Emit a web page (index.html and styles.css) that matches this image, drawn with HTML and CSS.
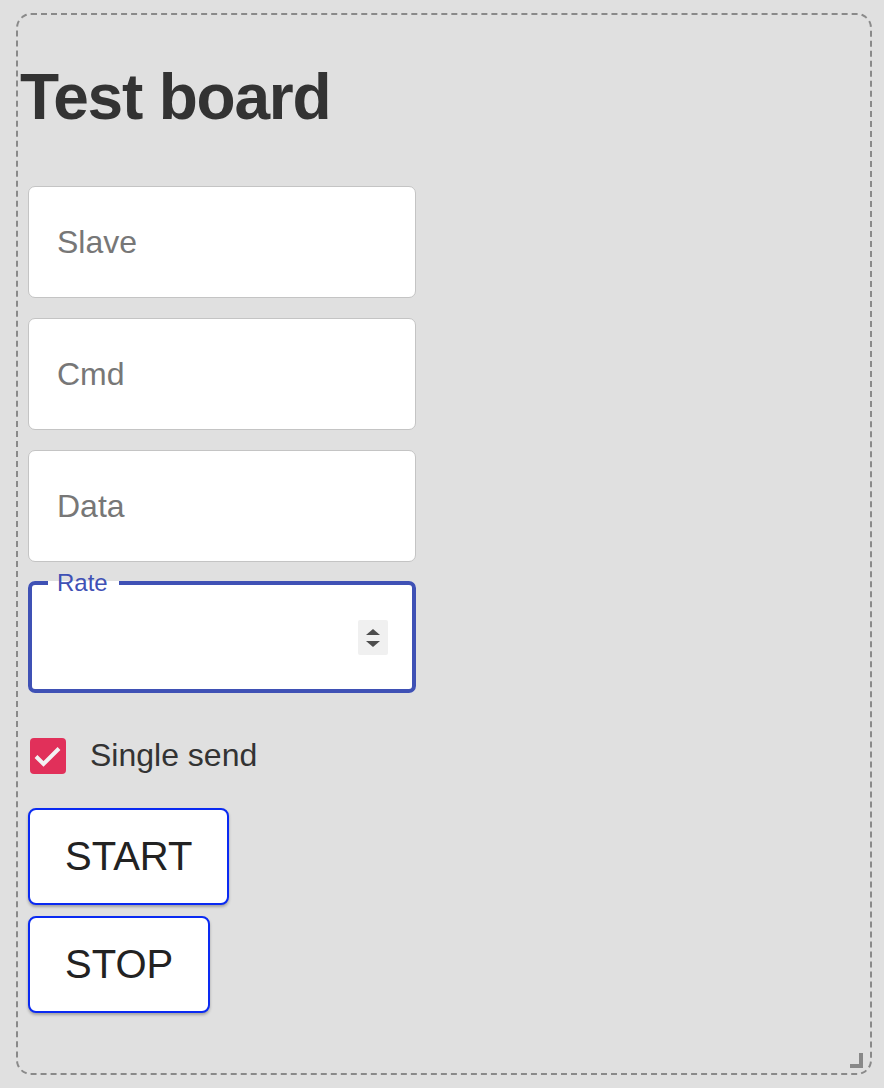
FILE: index.html
```html
<!DOCTYPE html>
<html lang="en">
<head>
<meta charset="utf-8">
<title>Test board</title>
<link rel="stylesheet" href="styles.css">
</head>
<body>
<div class="board">
  <h1 class="title">Test board</h1>
  <form class="form">
    <div class="field"><input class="input" type="text" placeholder="Slave"></div>
    <div class="field"><input class="input" type="text" placeholder="Cmd"></div>
    <div class="field"><input class="input" type="text" placeholder="Data"></div>
    <fieldset class="field-focused">
      <legend class="legend">Rate</legend>
      <div class="focused-inner">
        <span class="spinner">
          <svg width="30" height="35" viewBox="0 0 30 35">
            <path d="M8 15 L15 9 L22 15 Z" fill="#4d4d4d"/>
            <path d="M8 21 L22 21 L15 27 Z" fill="#4d4d4d"/>
          </svg>
        </span>
      </div>
    </fieldset>
    <label class="check-row">
      <span class="checkbox">
        <svg width="36" height="36" viewBox="0 0 36 36">
          <path d="M6 18.5 L13.5 26 L29 10.5" fill="none" stroke="#f2f2f2" stroke-width="4"/>
        </svg>
      </span>
      <span class="check-label">Single send</span>
    </label>
    <div class="buttons">
      <button type="button" class="btn">START</button>
      <button type="button" class="btn">STOP</button>
    </div>
  </form>
  <span class="resizer"></span>
</div>
</body>
</html>
```
FILE: styles.css
```css
html, body {
  margin: 0;
  padding: 0;
  background: #e0e0e0;
  font-family: "Liberation Sans", Arial, sans-serif;
}

.board {
  position: relative;
  box-sizing: border-box;
  margin: 13px 12px 0 16px;
  width: 856px;
  height: 1062px;
  border: 2px dashed #8a8a8a;
  border-radius: 15px;
  padding: 0 0 0 2px;
}

.title {
  margin: 44px 0 0 0;
  font-size: 64px;
  line-height: 77px;
  font-weight: 700;
  color: #333;
  letter-spacing: -1.2px;
}

.form {
  margin: 50px 0 0 8px;
  display: flex;
  flex-direction: column;
  align-items: flex-start;
}

.field {
  width: 388px;
  height: 112px;
  margin-bottom: 20px;
}

.input {
  box-sizing: border-box;
  width: 100%;
  height: 100%;
  border: 1px solid #c4c4c4;
  border-radius: 7px;
  background: #fff;
  padding: 0 28px;
  font-family: "Liberation Sans", Arial, sans-serif;
  font-size: 32px;
  color: #333;
  outline: none;
}

.input::placeholder {
  color: #777;
}

.field-focused {
  box-sizing: border-box;
  width: 388px;
  margin: -11px 0 0 0;
  padding: 0;
  border: 4px solid #3f51b5;
  border-radius: 7px;
  background: #fff;
  min-width: 0;
}

.legend {
  margin-left: 16px;
  padding: 0 11px 0 9px;
  font-size: 24px;
  line-height: 24px;
  color: #3f51b5;
}

.focused-inner {
  height: 104px;
  margin-top: -10px;
  display: flex;
  align-items: center;
  justify-content: flex-end;
  padding-right: 24px;
}

.spinner {
  display: block;
  width: 30px;
  height: 35px;
  background: #f0f0f0;
  border-radius: 2px;
}

.spinner svg {
  display: block;
}

.check-row {
  margin-top: 44px;
  display: flex;
  align-items: center;
  gap: 24px;
  margin-left: 2px;
}

.checkbox {
  width: 36px;
  height: 36px;
  border-radius: 4px;
  background: #e1305a;
  display: block;
}

.checkbox svg {
  display: block;
}

.check-label {
  font-size: 32px;
  color: #333;
}

.buttons {
  margin-top: 34px;
  display: flex;
  flex-direction: column;
  align-items: flex-start;
  gap: 11px;
}

.btn {
  box-sizing: border-box;
  height: 97px;
  padding: 0 35px;
  border: 2px solid #0a2af2;
  border-radius: 8px;
  background: #fff;
  box-shadow: 0 2px 3px rgba(0, 0, 0, 0.28);
  font-family: "Liberation Sans", Arial, sans-serif;
  font-size: 40px;
  color: #222;
  cursor: pointer;
}

.resizer {
  position: absolute;
  right: 7px;
  bottom: 5px;
  width: 9px;
  height: 11px;
  border-right: 4px solid #888;
  border-bottom: 4px solid #888;
}
```
